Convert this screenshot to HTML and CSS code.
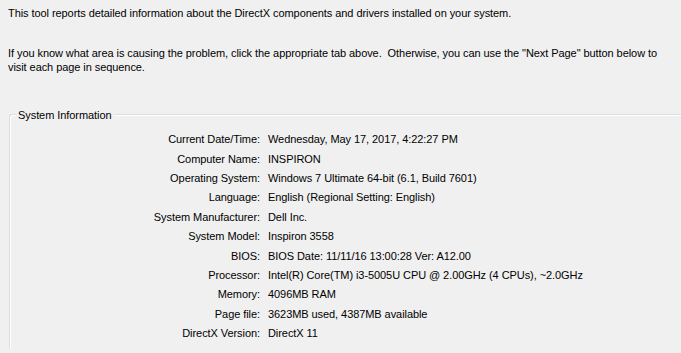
FILE: index.html
```html
<!DOCTYPE html>
<html lang="en">
<head>
  <meta charset="UTF-8" />
  <title>DirectX Diagnostic Tool</title>
  <link rel="stylesheet" href="styles.css">
</head>
<body>

  <p class="intro">This tool reports detailed information about the DirectX components and drivers installed on your system.</p>
  <p class="intro hint">If you know what area is causing the problem, click the appropriate tab above.&nbsp; Otherwise, you can use the "Next Page" button below to visit each page in sequence.</p>

  <div class="group">
    <div class="legend">System Information</div>
    <div class="info">
      <div class="label">Current Date/Time:</div><div class="value">Wednesday, May 17, 2017, 4:22:27 PM</div>
      <div class="label">Computer Name:</div><div class="value">INSPIRON</div>
      <div class="label">Operating System:</div><div class="value">Windows 7 Ultimate 64-bit (6.1, Build 7601)</div>
      <div class="label">Language:</div><div class="value">English (Regional Setting: English)</div>
      <div class="label">System Manufacturer:</div><div class="value">Dell Inc.</div>
      <div class="label">System Model:</div><div class="value">Inspiron 3558</div>
      <div class="label">BIOS:</div><div class="value">BIOS Date: 11/11/16 13:00:28 Ver: A12.00</div>
      <div class="label">Processor:</div><div class="value">Intel(R) Core(TM) i3-5005U CPU @ 2.00GHz (4 CPUs), ~2.0GHz</div>
      <div class="label">Memory:</div><div class="value">4096MB RAM</div>
      <div class="label">Page file:</div><div class="value">3623MB used, 4387MB available</div>
      <div class="label">DirectX Version:</div><div class="value">DirectX 11</div>
    </div>
  </div>

</body>
</html>
```

FILE: styles.css
```css
* { box-sizing: border-box; }
html, body {
  height: 100%;
  overflow: hidden;
}
body {
  margin: 0;
  padding: 7px 0 0 8px;
  background: #f0f0f0;
  color: #000;
  font-family: 'Liberation Sans', Arial, sans-serif;
  font-size: 11px;
  line-height: 13px;
  letter-spacing: -0.07px;
}
.intro {
  margin: 0;
  width: 665px;
}
.hint {
  margin-top: 27px;
  line-height: 13.5px;
}
/* group box: only top and left edges fall inside the window */
.group {
  position: relative;
  margin: 40px 0 0 1px;
  height: 235px;
  border-top: 1px solid #d5dfe5;
  border-left: 1px solid #d5dfe5;
  border-top-left-radius: 3px;
  box-shadow: inset 1px 1px 0 #fff;
}
.legend {
  position: absolute;
  top: -6px;
  left: 6px;
  padding: 0 2px;
  background: #f0f0f0;
}
.info {
  display: grid;
  grid-template-columns: 250px auto;
  grid-auto-rows: 19.4px;
  column-gap: 8px;
  padding-top: 15px;
  align-items: center;
}
.label {
  text-align: right;
}
```
